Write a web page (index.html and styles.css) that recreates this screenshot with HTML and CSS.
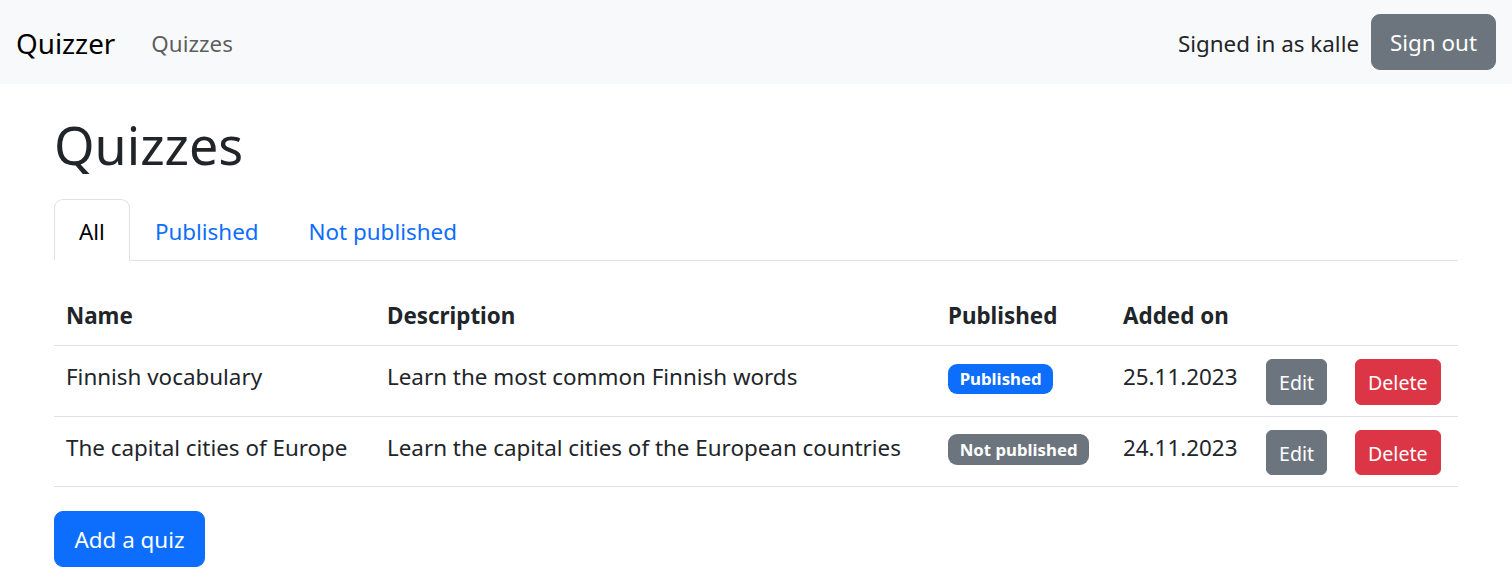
FILE: index.html
```html
<!DOCTYPE html>
<html lang="en">
<head>
<meta charset="utf-8">
<title>Quizzer</title>
<link rel="stylesheet" href="styles.css">
</head>
<body>
<nav class="navbar">
  <div class="nav-left">
    <a class="brand" href="#">Quizzer</a>
    <a class="nav-link" href="#">Quizzes</a>
  </div>
  <div class="nav-right">
    <span class="nav-text">Signed in as kalle</span>
    <button class="btn btn-secondary">Sign out</button>
  </div>
</nav>
<main class="container">
  <h1 class="title">Quizzes</h1>
  <ul class="tabs">
    <li><a class="tab active" href="#">All</a></li>
    <li><a class="tab" href="#">Published</a></li>
    <li><a class="tab" href="#">Not published</a></li>
  </ul>
  <table class="table">
    <colgroup>
      <col class="c-name"><col class="c-desc"><col class="c-pub"><col class="c-date"><col class="c-edit"><col class="c-del">
    </colgroup>
    <thead>
      <tr><th>Name</th><th>Description</th><th>Published</th><th>Added on</th><th></th><th></th></tr>
    </thead>
    <tbody>
      <tr>
        <td>Finnish vocabulary</td>
        <td>Learn the most common Finnish words</td>
        <td><span class="badge badge-primary">Published</span></td>
        <td>25.11.2023</td>
        <td><button class="btn btn-sm btn-secondary">Edit</button></td>
        <td><button class="btn btn-sm btn-danger">Delete</button></td>
      </tr>
      <tr>
        <td>The capital cities of Europe</td>
        <td>Learn the capital cities of the European countries</td>
        <td><span class="badge badge-secondary">Not published</span></td>
        <td>24.11.2023</td>
        <td><button class="btn btn-sm btn-secondary">Edit</button></td>
        <td><button class="btn btn-sm btn-danger">Delete</button></td>
      </tr>
    </tbody>
  </table>
  <button class="btn btn-primary btn-add">Add a quiz</button>
</main>
</body>
</html>
```

FILE: styles.css
```css
* { box-sizing: border-box; }
html, body { margin: 0; padding: 0; }
body {
  font-family: "Noto Sans", "Open Sans", sans-serif;
  font-size: 22.4px;
  line-height: 36px;
  color: #212529;
  background: #fff;
}
a { text-decoration: none; }

.navbar {
  height: 84px;
  background: #f8f9fa;
  display: flex;
  align-items: center;
  justify-content: space-between;
  padding: 0 16px;
}
.nav-left, .nav-right { display: flex; align-items: center; }
.brand {
  font-size: 27.8px;
  line-height: 45px;
  color: #000;
  margin-right: 24px;
  padding-top: 3px;
}
.nav-link {
  color: rgba(0,0,0,.65);
  padding: 15px 12px 12px;
}
.nav-text { color: #212529; margin-right: 12px; padding-top: 3px; }

.btn {
  font-family: inherit;
  font-size: 22.4px;
  line-height: 36px;
  padding: 10px 18px 8px;
  border: 1.5px solid transparent;
  border-radius: 9px;
  color: #fff;
  cursor: pointer;
}
.btn-add { padding-left: 19.5px; padding-right: 19.5px; }
.btn-sm {
  font-size: 19.6px;
  line-height: 31.5px;
  padding: 7px 12px 5px;
  border-radius: 6px;
}
.btn-secondary { background: #6c757d; border-color: #6c757d; }
.btn-danger { background: #dc3545; border-color: #dc3545; }
.btn-primary { background: #0d6efd; border-color: #0d6efd; }

.container {
  width: 1404px;
  margin: 0 auto;
  padding-top: 25px;
}
.title {
  font-size: 52px;
  line-height: 72px;
  font-weight: 400;
  margin: 0 0 18px;
}
.tabs {
  list-style: none;
  margin: 0;
  padding: 0;
  display: flex;
  border-bottom: 1px solid #dee2e6;
}
.tab {
  display: block;
  padding: 14px 24px 10px;
  color: #0d6efd;
  border: 1px solid transparent;
  border-radius: 9px 9px 0 0;
  margin-bottom: -1px;
}
.tab.active {
  color: #000;
  background: #fff;
  border-color: #dee2e6 #dee2e6 #fff;
}

.table {
  width: 100%;
  table-layout: fixed;
  border-collapse: collapse;
  margin: 24px 0 24px;
}
.c-name { width: 321px; }
.c-desc { width: 561px; }
.c-pub { width: 175px; }
.c-date { width: 143px; }
.c-edit { width: 89px; }
.c-del { width: 115px; }
.table th, .table td {
  padding: 13px 12px 11px;
  border-bottom: 1px solid #dee2e6;
  text-align: left;
  vertical-align: top;
  white-space: nowrap;
}
.table th { font-weight: 700; }

.badge {
  display: inline-block;
  font-size: 16.8px;
  line-height: 18px;
  font-weight: 700;
  padding: 6.3px 11.7px;
  border-radius: 9px;
  color: #fff;
  vertical-align: baseline;
}
.badge-primary { background: #0d6efd; }
.badge-secondary { background: #6c757d; }
```
